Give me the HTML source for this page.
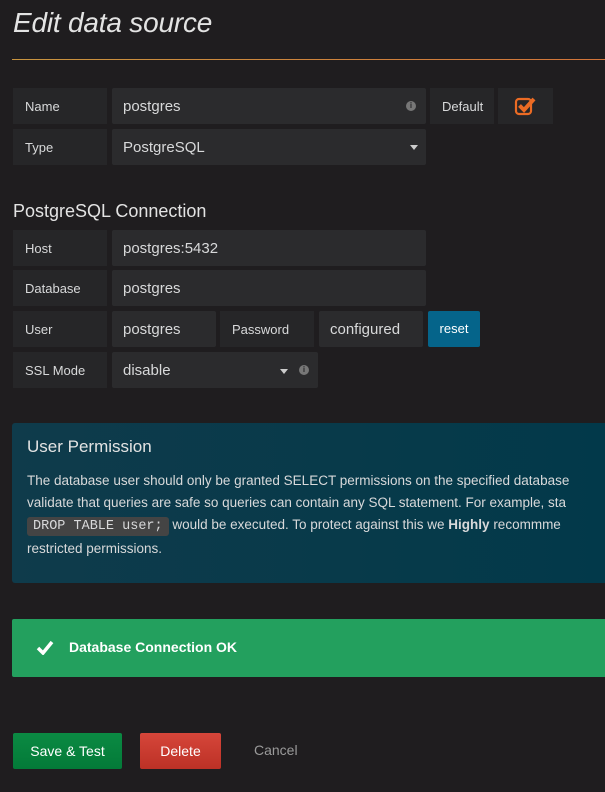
<!DOCTYPE html>
<html><head><meta charset="utf-8"><style>
*{box-sizing:border-box;margin:0;padding:0}
body{width:605px;height:792px;overflow:hidden;background:#1f1d1f;font-family:"Liberation Sans",sans-serif;color:#d8d9da;position:relative}
.a{position:absolute}
h1{position:absolute;left:13px;top:7px;font-size:28px;font-weight:normal;font-style:italic;color:#e3e3e3;letter-spacing:-0.2px}
.line{left:12px;top:59px;width:600px;height:1px;background:linear-gradient(90deg,#c8943f,#d2743a)}
.lb{background:#262628;font-size:13px;color:#d8d9da;padding-left:12px;display:flex;align-items:center;height:36px}
.in{background:#2b2b2d;font-size:15px;color:#d8d9da;padding-left:11px;display:flex;align-items:center;height:36px;border-radius:2px}
.info{position:absolute;width:10px;height:10px;border-radius:50%;background:#777;color:#2b2b2d;font-size:8px;font-weight:bold;text-align:center;line-height:10px}
.caret{position:absolute;width:0;height:0;border-left:4px solid transparent;border-right:4px solid transparent;border-top:5px solid #ccc}
</style></head><body>
<h1>Edit data source</h1>
<div class="a line"></div>

<div class="a lb" style="left:13px;top:88px;width:94px">Name</div>
<div class="a in" style="left:112px;top:88px;width:314px">postgres<span class="info" style="left:294px;top:13px">i</span></div>
<div class="a lb" style="left:430px;top:88px;width:64px">Default</div>
<div class="a lb" style="left:498px;top:88px;width:55px;padding:0">
<svg class="a" style="left:16px;top:7px" width="24" height="22" viewBox="0 0 24 22"><rect x="2" y="4" width="15" height="15" rx="3" fill="none" stroke="#eb6b24" stroke-width="2.2"/><path d="M5.5 10.5l4.5 4.5l10-11" fill="none" stroke="#eb6b24" stroke-width="4"/></svg></div>

<div class="a lb" style="left:13px;top:129px;width:94px">Type</div>
<div class="a in" style="left:112px;top:129px;width:314px">PostgreSQL<span class="caret" style="left:298px;top:16px"></span></div>

<div class="a" style="left:13px;top:201px;font-size:18px;color:#e3e3e3">PostgreSQL Connection</div>

<div class="a lb" style="left:13px;top:230px;width:94px">Host</div>
<div class="a in" style="left:112px;top:230px;width:314px">postgres:5432</div>
<div class="a lb" style="left:13px;top:270px;width:94px">Database</div>
<div class="a in" style="left:112px;top:270px;width:314px">postgres</div>
<div class="a lb" style="left:13px;top:311px;width:94px">User</div>
<div class="a in" style="left:112px;top:311px;width:104px">postgres</div>
<div class="a lb" style="left:220px;top:311px;width:94px">Password</div>
<div class="a in" style="left:319px;top:311px;width:104px">configured</div>
<div class="a" style="left:428px;top:311px;width:52px;height:36px;background:#05648a;border-radius:2px;color:#fff;font-size:13px;text-align:center;line-height:36px">reset</div>
<div class="a lb" style="left:13px;top:352px;width:94px">SSL Mode</div>
<div class="a in" style="left:112px;top:352px;width:206px">disable<span class="caret" style="left:168px;top:17px"></span><span class="info" style="left:187px;top:13px">i</span></div>

<div class="a" style="left:12px;top:423px;width:600px;height:160px;background:linear-gradient(90deg,#0f3b4b,#02394a);border-radius:3px">
<div class="a" style="left:15px;top:14px;font-size:17px;color:#e3e3e3">User Permission</div>
<div class="a" style="left:15px;top:47px;width:620px;font-size:13.5px;line-height:22px;color:#d8d9da;white-space:nowrap">The database user should only be granted SELECT permissions on the specified database<br>validate that queries are safe so queries can contain any SQL statement. For example, sta<br><span style="font-family:'Liberation Mono',monospace;background:#444;border-radius:3px;padding:2px 6px;font-size:13.5px">DROP TABLE user;</span> would be executed. To protect against this we <b>Highly</b> recommme<br>restricted permissions.</div>
</div>

<div class="a" style="left:12px;top:619px;width:600px;height:58px;background:#23a05e;border-radius:2px">
<svg class="a" style="left:24px;top:21px" width="18" height="15" viewBox="0 0 18 15"><path d="M2 8l5 5l9-11" fill="none" stroke="#fff" stroke-width="3.5"/></svg>
<div class="a" style="left:57px;top:20px;font-size:14px;font-weight:bold;color:#fff">Database Connection OK</div>
</div>

<div class="a" style="left:13px;top:733px;width:109px;height:36px;background:linear-gradient(#0b8a43,#037a38);border-radius:2px;color:#fff;font-size:14px;text-align:center;line-height:36px">Save &amp; Test</div>
<div class="a" style="left:140px;top:733px;width:81px;height:36px;background:linear-gradient(#d6463a,#bc3126);border-radius:2px;color:#fff;font-size:14px;text-align:center;line-height:36px">Delete</div>
<div class="a" style="left:254px;top:742px;font-size:14px;color:#9a9a9a">Cancel</div>
</body></html>
